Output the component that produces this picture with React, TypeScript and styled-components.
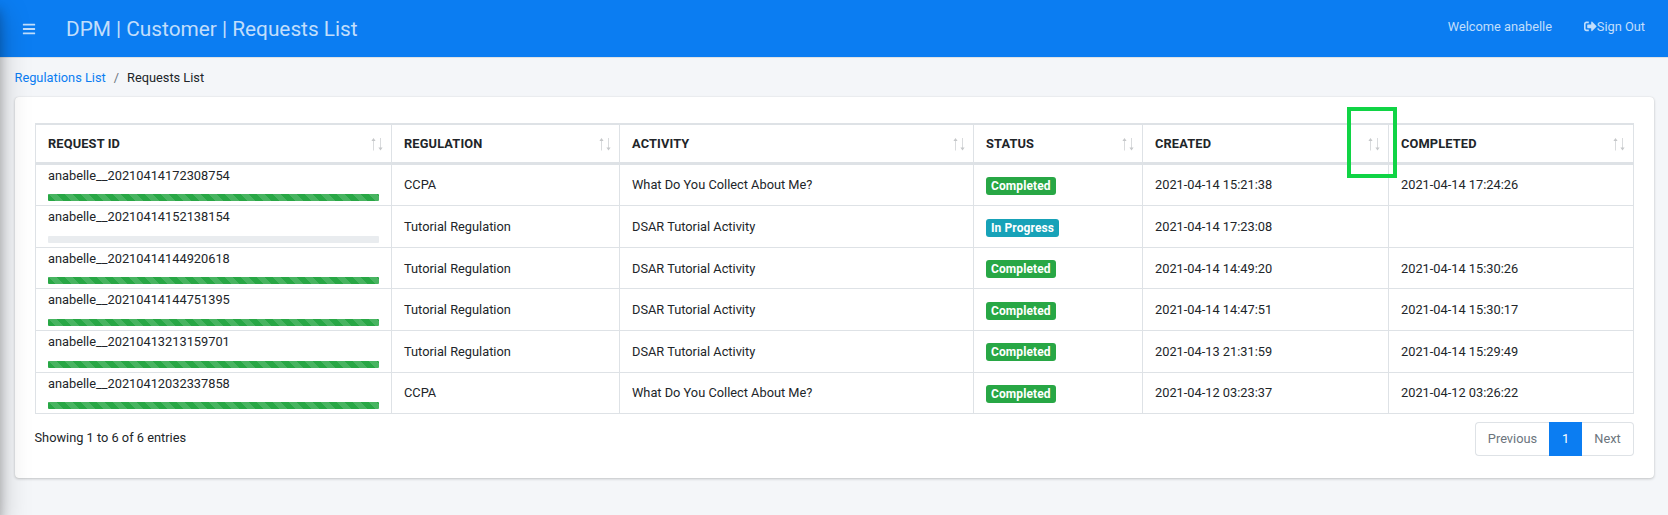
import React from 'react';
import styled, { createGlobalStyle } from 'styled-components';
import { FaBars, FaSignOutAlt } from 'react-icons/fa';

const GlobalStyle = createGlobalStyle`
  * { box-sizing: border-box; }
  body {
    margin: 0;
    background: #f4f6f9;
    color: #212529;
    font: 400 12.8px/20px Roboto, sans-serif;
  }
`;

const Page = styled.div`
  position: relative;
  height: 515px;
  overflow: hidden;
`;

/* Collapsed sidebar: only its shadow reaches the page */
const Sidebar = styled.aside`
  position: absolute;
  top: 0;
  left: -250px;
  width: 250px;
  height: 100%;
  box-shadow: 0 14px 28px rgba(0, 0, 0, 0.25), 0 10px 10px rgba(0, 0, 0, 0.22);
`;

const Navbar = styled.header`
  display: flex;
  align-items: center;
  height: 58px;
  padding: 0 23px 0 22px;
  background: #0b7df2;
  border-bottom: 1px solid #dee2e6;
  color: rgba(255, 255, 255, 0.75);
`;

const MenuButton = styled.span`
  display: flex;
  width: 44px;
  font-size: 14px;
`;

const Title = styled.h1`
  margin: 0;
  font-size: 20.8px;
  line-height: 30px;
  font-weight: 400;
`;

const UserArea = styled.nav`
  display: flex;
  align-items: center;
  gap: 32px;
  margin: 0 0 4px auto;
`;

const SignOut = styled.a`
  display: flex;
  align-items: center;
`;

const Breadcrumb = styled.nav`
  display: flex;
  gap: 8px;
  padding: 10px 14.5px 0;
  height: 39px;
`;

const CrumbLink = styled.a`
  color: #0b7df2;
`;

const CrumbDivider = styled.span`
  color: #6c757d;
`;

const Card = styled.main`
  height: 381px;
  margin: 0 14px 0 15px;
  padding: 26px 20px 0;
  background: #fff;
  border-radius: 4px;
  box-shadow: 0 0 1px rgba(0, 0, 0, 0.125), 0 1px 3px rgba(0, 0, 0, 0.2);
`;

const Table = styled.div`
  width: 1599px;
  border-left: 1px solid #dee2e6;
`;

const Row = styled.div`
  display: grid;
  grid-template-columns: 356px 228px 354px 169px 246px 245px;
  height: 41.6px;
`;

const HeadCell = styled.div`
  position: relative;
  display: flex;
  align-items: center;
  justify-content: space-between;
  padding: 1px 7px 0 12px;
  border: solid #dee2e6;
  border-width: 2px 1px 3px 0;
  font-weight: 700;
  letter-spacing: 0.15px;
`;

const Highlight = styled.div`
  position: absolute;
  z-index: 1;
  top: -18px;
  right: -9px;
  width: 50px;
  height: 71px;
  border: 4px solid #10d445;
`;

const Cell = styled.div`
  display: flex;
  align-items: center;
  padding: 1.1px 12px 0;
  border: solid #dee2e6;
  border-width: 0 1px 1px 0;
`;

const IdCell = styled(Cell)`
  flex-direction: column;
  align-items: stretch;
  justify-content: space-between;
  padding: 1px 12px 4.05px;
`;

const Progress = styled.div<{ $done: boolean }>`
  height: 7px;
  border-radius: 1px;
  background-color: ${(p) => (p.$done ? '#28a745' : '#e9ecef')};
  background-image: ${(p) =>
    p.$done
      ? 'linear-gradient(45deg, rgba(255,255,255,.15) 25%, transparent 25%, transparent 50%, rgba(255,255,255,.15) 50%, rgba(255,255,255,.15) 75%, transparent 75%, transparent)'
      : 'none'};
  background-size: 16px 16px;
`;

const Badge = styled.span<{ $done: boolean }>`
  height: 18px;
  margin-top: 1.1px;
  padding: 0 5px;
  border-radius: 3px;
  background: ${(p) => (p.$done ? '#28a745' : '#17a2b8')};
  color: #fff;
  font-size: 12px;
  font-weight: 700;
  line-height: 18px;
  letter-spacing: 0.1px;
`;

const Footer = styled.footer`
  display: flex;
  justify-content: space-between;
  padding-top: 7.8px;
`;

const Info = styled.div`
  padding-top: 6px;
  margin-left: -0.5px;
`;

const Pager = styled.div`
  display: flex;
  height: 34px;
`;

const PageItem = styled.span<{ $active?: boolean; $side?: 'left' | 'right'; $width: number }>`
  display: flex;
  align-items: center;
  justify-content: center;
  width: ${(p) => p.$width}px;
  border: 1px solid ${(p) => (p.$active ? '#0b7df2' : '#dee2e6')};
  ${(p) => p.$side === 'left' && 'border-right: 0; border-radius: 4px 0 0 4px;'}
  ${(p) => p.$side === 'right' && 'border-left: 0; border-radius: 0 4px 4px 0;'}
  background: ${(p) => (p.$active ? '#0b7df2' : '#fff')};
  color: ${(p) => (p.$active ? '#fff' : '#6c757d')};
`;

const SortArrows = () => (
  <svg width="14" height="14" viewBox="0 0 14 14" fill="none">
    <path d="M3.5 13.5V2M10.5 1V12.5" stroke="#d9dbdd" />
    <path d="M3.5 1L5.6 4H1.4ZM10.5 13.5L12.6 10.5H8.4Z" fill="#c6c8ca" />
  </svg>
);

const columns = ['REQUEST ID', 'REGULATION', 'ACTIVITY', 'STATUS', 'CREATED', 'COMPLETED'];

const requests = [
  { id: 'anabelle__20210414172308754', regulation: 'CCPA', activity: 'What Do You Collect About Me?', done: true, created: '2021-04-14 15:21:38', completed: '2021-04-14 17:24:26' },
  { id: 'anabelle__20210414152138154', regulation: 'Tutorial Regulation', activity: 'DSAR Tutorial Activity', done: false, created: '2021-04-14 17:23:08', completed: '' },
  { id: 'anabelle__20210414144920618', regulation: 'Tutorial Regulation', activity: 'DSAR Tutorial Activity', done: true, created: '2021-04-14 14:49:20', completed: '2021-04-14 15:30:26' },
  { id: 'anabelle__20210414144751395', regulation: 'Tutorial Regulation', activity: 'DSAR Tutorial Activity', done: true, created: '2021-04-14 14:47:51', completed: '2021-04-14 15:30:17' },
  { id: 'anabelle__20210413213159701', regulation: 'Tutorial Regulation', activity: 'DSAR Tutorial Activity', done: true, created: '2021-04-13 21:31:59', completed: '2021-04-14 15:29:49' },
  { id: 'anabelle__20210412032337858', regulation: 'CCPA', activity: 'What Do You Collect About Me?', done: true, created: '2021-04-12 03:23:37', completed: '2021-04-12 03:26:22' },
];

export default function App() {
  return (
    <Page>
      <GlobalStyle />
      <Navbar>
        <MenuButton><FaBars /></MenuButton>
        <Title>DPM | Customer | Requests List</Title>
        <UserArea>
          <span>Welcome anabelle</span>
          <SignOut><FaSignOutAlt />Sign Out</SignOut>
        </UserArea>
      </Navbar>
      <Breadcrumb>
        <CrumbLink>Regulations List</CrumbLink>
        <CrumbDivider>/</CrumbDivider>
        <span>Requests List</span>
      </Breadcrumb>
      <Card>
        <Table>
          <Row>
            {columns.map((name) => (
              <HeadCell key={name}>
                {name}
                <SortArrows />
                {name === 'CREATED' && <Highlight />}
              </HeadCell>
            ))}
          </Row>
          {requests.map((r) => (
            <Row key={r.id}>
              <IdCell>
                <span>{r.id}</span>
                <Progress $done={r.done} />
              </IdCell>
              <Cell>{r.regulation}</Cell>
              <Cell>{r.activity}</Cell>
              <Cell><Badge $done={r.done}>{r.done ? 'Completed' : 'In Progress'}</Badge></Cell>
              <Cell>{r.created}</Cell>
              <Cell>{r.completed}</Cell>
            </Row>
          ))}
        </Table>
        <Footer>
          <Info>Showing 1 to 6 of 6 entries</Info>
          <Pager>
            <PageItem $side="left" $width={74}>Previous</PageItem>
            <PageItem $active $width={33}>1</PageItem>
            <PageItem $side="right" $width={52}>Next</PageItem>
          </Pager>
        </Footer>
      </Card>
      <Sidebar />
    </Page>
  );
}
